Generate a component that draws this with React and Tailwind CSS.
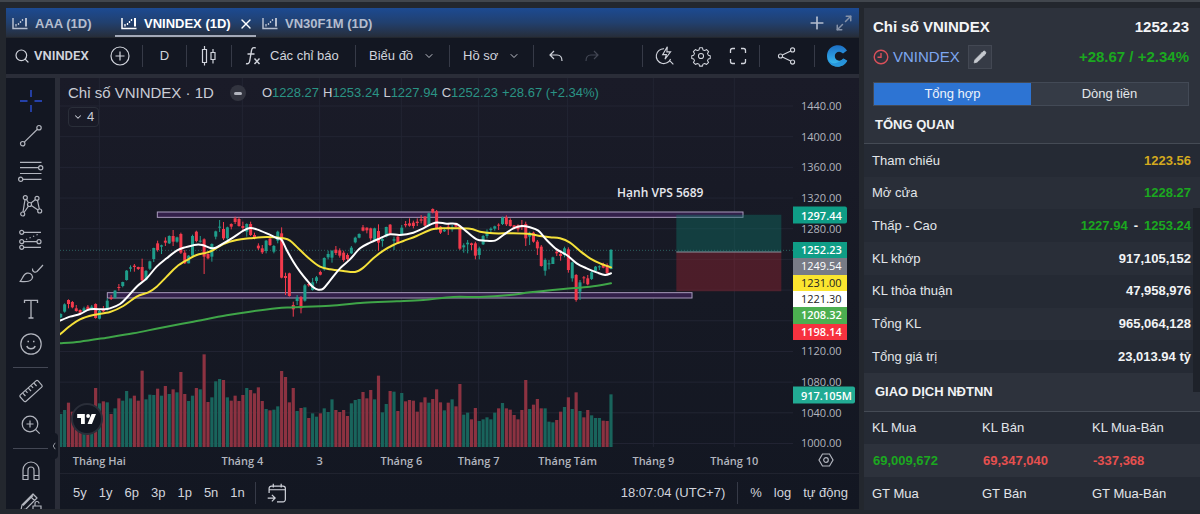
import { ChevronDown, Maximize2, Pencil, Plus, Search, X } from "lucide-react";

// [up/down, high, body top, body bottom, low, volume top], plot units
const CANDLES = [
  ["g", 340, 342, 352, 355, 222], ["g", 310, 313, 335, 338, 210], ["r", 298, 300, 312, 325, 188],
  ["r", 303, 306, 322, 325, 215], ["r", 315, 325, 333, 335, 230], ["r", 328, 330, 338, 340, 225],
  ["g", 320, 325, 333, 335, 235], ["r", 315, 320, 330, 332, 230], ["g", 315, 320, 326, 330, 215],
  ["r", 310, 312, 354, 356, 144], ["g", 330, 333, 356, 358, 190], ["r", 318, 330, 334, 336, 184],
  ["g", 295, 302, 328, 332, 187], ["r", 285, 293, 297, 300, 222], ["g", 270, 272, 293, 295, 205],
  ["r", 252, 261, 264, 272, 175], ["g", 245, 246, 258, 262, 182], ["g", 210, 212, 240, 242, 153],
  ["g", 196, 202, 206, 215, 175], ["r", 192, 197, 201, 215, 167], ["r", 200, 201, 207, 210, 182],
  ["r", 176, 201, 241, 245, 92], ["g", 210, 213, 240, 242, 178], ["g", 182, 184, 206, 210, 164],
  ["g", 143, 144, 177, 186, 165], ["r", 122, 130, 150, 155, 146], ["g", 134, 136, 140, 162, 167],
  ["r", 112, 122, 128, 138, 138], ["g", 106, 108, 130, 132, 162], ["r", 90, 108, 125, 138, 148],
  ["g", 110, 112, 125, 128, 157], ["r", 98, 102, 158, 162, 96], ["r", 150, 158, 190, 192, 162],
  ["g", 165, 167, 190, 190, 183], ["g", 104, 108, 167, 168, 167], ["r", 92, 95, 123, 127, 144],
  ["g", 108, 122, 125, 128, 148], ["r", 115, 118, 170, 222, 43], ["r", 160, 162, 175, 178, 186],
  ["g", 130, 132, 170, 185, 172], ["g", 92, 94, 110, 118, 124], ["g", 60, 80, 83, 96, 117],
  ["r", 66, 87, 115, 120, 120], ["g", 80, 82, 115, 120, 172], ["r", 70, 72, 80, 88, 182],
  ["r", 50, 55, 66, 72, 167], ["r", 52, 57, 78, 80, 183], ["r", 65, 78, 84, 95, 165],
  ["g", 70, 72, 95, 110, 144], ["r", 65, 72, 105, 108, 150], ["r", 98, 105, 114, 118, 160],
  ["r", 130, 137, 145, 150, 142], ["r", 135, 145, 157, 162, 183], ["g", 120, 122, 153, 160, 207],
  ["r", 112, 116, 135, 138, 211], ["g", 135, 138, 155, 160, 209], ["g", 92, 95, 122, 130, 199],
  ["r", 82, 100, 233, 235, 93], ["r", 218, 228, 234, 285, 111], ["r", 218, 220, 288, 290, 187],
  ["r", 305, 315, 328, 350, 144], ["g", 285, 293, 303, 315, 213], ["r", 288, 292, 325, 340, 204],
  ["g", 252, 256, 302, 305, 202], ["r", 245, 252, 256, 260, 234], ["g", 234, 247, 270, 272, 220],
  ["g", 228, 232, 243, 250, 230], ["r", 212, 216, 224, 226, 220], ["g", 172, 174, 208, 212, 205],
  ["g", 152, 162, 172, 178, 216], ["g", 150, 153, 173, 188, 178], ["r", 138, 149, 159, 165, 210],
  ["r", 145, 151, 167, 173, 216], ["r", 152, 158, 180, 185, 210], ["r", 160, 165, 177, 182, 228],
  ["g", 138, 143, 160, 162, 190], ["g", 110, 113, 127, 130, 180], ["g", 100, 102, 113, 115, 177],
  ["r", 75, 82, 92, 94, 156], ["r", 82, 83, 91, 100, 175], ["r", 83, 85, 115, 122, 150],
  ["g", 83, 85, 120, 123, 178], ["r", 73, 93, 128, 152, 107], ["g", 110, 117, 123, 140, 217],
  ["g", 80, 81, 110, 112, 192], ["r", 72, 74, 100, 102, 153], ["g", 110, 118, 122, 150, 155],
  ["r", 107, 110, 130, 132, 213], ["g", 75, 83, 105, 108, 159], ["r", 63, 72, 76, 82, 184],
  ["r", 55, 70, 77, 80, 180], ["r", 62, 68, 78, 85, 182], ["r", 55, 65, 69, 78, 215],
  ["r", 45, 58, 62, 70, 187], ["r", 48, 50, 77, 78, 172], ["g", 38, 40, 75, 78, 188],
  ["r", 25, 27, 37, 40, 177], ["r", 30, 34, 87, 89, 148], ["r", 78, 80, 98, 102, 187],
  ["g", 85, 90, 94, 96, 211], ["r", 70, 80, 84, 105, 188], ["g", 75, 82, 88, 95, 178],
  ["r", 68, 70, 80, 82, 199], ["r", 75, 78, 146, 150, 132], ["g", 130, 136, 142, 158, 224],
  ["g", 120, 128, 133, 160, 218], ["r", 128, 130, 135, 150, 238], ["r", 125, 130, 167, 178, 204],
  ["g", 140, 145, 165, 178, 243], ["g", 105, 108, 133, 135, 238], ["g", 88, 95, 108, 115, 232],
  ["g", 82, 86, 90, 98, 238], ["g", 77, 79, 86, 92, 218], ["r", 70, 74, 77, 90, 205],
  ["g", 50, 53, 72, 75, 189], ["r", 46, 52, 73, 78, 205], ["r", 55, 60, 78, 80, 209],
  ["r", 75, 76, 85, 88, 225], ["r", 73, 76, 88, 95, 238], ["r", 60, 77, 82, 90, 210],
  ["r", 65, 72, 115, 138, 120], ["g", 95, 98, 110, 135, 207], ["r", 95, 98, 125, 128, 194],
  ["r", 120, 125, 145, 165, 177], ["r", 135, 140, 198, 200, 205], ["g", 175, 180, 212, 227, 205],
  ["g", 180, 190, 193, 208, 245], ["g", 170, 172, 192, 192, 247], ["r", 145, 155, 160, 168, 240],
  ["r", 150, 162, 168, 182, 215], ["g", 140, 145, 165, 172, 201], ["r", 142, 148, 210, 218, 172],
  ["g", 185, 187, 235, 245, 207], ["r", 222, 225, 300, 305, 157], ["g", 240, 247, 275, 300, 213],
  ["r", 228, 232, 235, 250, 232], ["r", 225, 235, 253, 256, 210], ["g", 213, 217, 237, 240, 226],
  ["g", 198, 200, 213, 215, 234], ["g", 196, 199, 202, 210, 234], ["r", 188, 192, 203, 205, 242],
  ["r", 190, 195, 220, 220, 243], ["g", 147, 150, 207, 208, 163],
];

const MA_FAST = [
  [0, 362], [30, 350], [60, 342], [90, 328], [130, 328], [150, 325], [180, 312], [205, 288],
  [230, 260], [260, 235], [290, 200], [320, 175], [350, 152], [375, 142], [410, 134], [430, 136],
  [460, 145], [490, 130], [520, 112], [550, 92], [570, 84], [590, 88], [620, 100], [650, 114],
  [665, 120], [680, 150], [700, 185], [720, 215], [740, 240], [760, 262], [775, 269], [790, 266],
  [810, 242], [840, 205], [870, 178], [900, 145], [930, 128], [960, 115], [990, 103], [1020, 105],
  [1060, 98], [1090, 85], [1125, 68], [1160, 71], [1190, 72], [1220, 95], [1250, 118], [1275, 122],
  [1305, 122], [1330, 105], [1360, 85], [1385, 78], [1410, 82], [1435, 92], [1460, 120],
  [1490, 148], [1520, 165], [1550, 190], [1580, 205], [1610, 217], [1635, 225], [1653, 220],
];

const MA_SLOW = [
  [0, 403], [30, 378], [60, 358], [100, 345], [150, 336], [190, 318], [230, 290], [265, 277],
  [290, 260], [320, 230], [350, 200], [385, 178], [410, 165], [440, 158], [460, 150], [490, 132],
  [530, 120], [570, 115], [620, 111], [670, 115], [690, 122], [720, 150], [750, 178], [780, 200],
  [810, 208], [850, 213], [885, 216], [910, 203], [940, 175], [970, 152], [1000, 135], [1030, 123],
  [1070, 108], [1120, 87], [1170, 85], [1230, 86], [1260, 95], [1300, 100], [1360, 100],
  [1410, 102], [1440, 108], [1470, 112], [1500, 115], [1530, 128], [1560, 153], [1590, 175],
  [1620, 190], [1653, 202],
];

const MA_LONG = [
  [0, 430], [60, 425], [140, 413], [220, 400], [300, 384], [400, 365], [500, 346], [570, 335],
  [650, 325], [700, 322], [810, 317], [910, 308], [1010, 304], [1090, 300], [1180, 291],
  [1260, 291], [1350, 285], [1410, 277], [1510, 267], [1590, 260], [1653, 250],
];

const PRICES = [1440, 1400, 1360, 1320, 1280, 1120, 1080, 1040, 1000];
const GRID_PRICES = [1440, 1400, 1360, 1320, 1280, 1240, 1200, 1160, 1120, 1080, 1040, 1000];

// x is in plot units (0..2199)
const MONTHS = [
  { label: "Tháng Hai", x: 118 },
  { label: "Tháng 4", x: 547 },
  { label: "3", x: 779 },
  { label: "Tháng 6", x: 1024 },
  { label: "Tháng 7", x: 1256 },
  { label: "Tháng Tám", x: 1523 },
  { label: "Tháng 9", x: 1780 },
  { label: "Tháng 10", x: 2023 },
];

const TAGS = [
  { value: "1252.23", className: "bg-[#0f9d86] text-white font-semibold" },
  { value: "1249.54", className: "bg-[#787b86] text-white" },
  { value: "1231.00", className: "bg-[#fbe52f] text-[#222222]" },
  { value: "1221.30", className: "bg-white text-[#222222]" },
  { value: "1208.32", className: "bg-[#4caf50] text-white font-semibold" },
  { value: "1198.14", className: "bg-[#f7323f] text-white font-semibold" },
];

const OVERVIEW = [
  { label: "Tham chiếu", value: "1223.56", className: "text-[#d3a91e]" },
  { label: "Mở cửa", value: "1228.27", className: "text-[#1ba81f]" },
  { label: "Thấp - Cao", value: "1227.94", high: "1253.24", className: "text-[#1ba81f]" },
  { label: "KL khớp", value: "917,105,152", className: "text-[#f1f3f5]" },
  { label: "KL thỏa thuận", value: "47,958,976", className: "text-[#f1f3f5]" },
  { label: "Tổng KL", value: "965,064,128", className: "text-[#f1f3f5]" },
  { label: "Tổng giá trị", value: "23,013.94 tỷ", className: "text-[#f1f3f5]" },
];

const priceTop = (price) => 28 + (1440 - price) * 0.767;

// Catmull-Rom through the points, written as cubic beziers
function smooth(points) {
  let d = `M${points[0][0]} ${points[0][1]}`;
  for (let i = 0; i < points.length - 1; i++) {
    const a = points[i - 1] || points[i];
    const b = points[i];
    const c = points[i + 1];
    const e = points[i + 2] || c;
    d += `C${b[0] + (c[0] - a[0]) / 6} ${b[1] + (c[1] - a[1]) / 6} ${c[0] - (e[0] - b[0]) / 6} ${c[1] - (e[1] - b[1]) / 6} ${c[0]} ${c[1]}`;
  }
  return d;
}

function Icon({ children, className = "size-7" }) {
  return (
    <svg
      viewBox="0 0 28 28"
      className={className}
      fill="none"
      stroke="currentColor"
      strokeWidth="1.2"
      aria-hidden="true"
    >
      {children}
    </svg>
  );
}

function TabIcon() {
  return (
    <svg viewBox="0 0 16 13" className="h-[13px] w-4 shrink-0" fill="none" stroke="currentColor" aria-hidden="true">
      <path d="M1 1v10.500h14.500" strokeWidth="1.500" />
      <path d="M14 1v8.500" strokeWidth="2" />
      <path d="M4 9.500V7M6.500 8V6M8.500 6V4M10.500 4V2" strokeWidth="1.300" />
    </svg>
  );
}

function Tab({ label, active, className }) {
  return (
    <button
      type="button"
      role="tab"
      aria-selected={Boolean(active)}
      className={`flex h-full items-center gap-[7px] border-b-2 px-1.5 pt-1 text-[13px] font-bold whitespace-nowrap ${
        active ? "border-[#a3a9b8] text-white" : "border-transparent text-[#b4bdce]"
      } ${className}`}
    >
      <TabIcon />
      <span>{label}</span>
      {active && <X className="size-4 shrink-0" strokeWidth={2} />}
    </button>
  );
}

function TabBar() {
  return (
    <div
      role="tablist"
      className="flex h-[29px] items-center bg-linear-to-b from-[#1c4a92] via-[#21406f] to-[#262d3a]"
    >
      <Tab label="AAA (1D)" className="w-[109px]" />
      <Tab label="VNINDEX (1D)" active className="w-[141px]" />
      <Tab label="VN30F1M (1D)" className="w-[130px]" />
      <div className="ml-auto flex items-center gap-2 pr-1.5 text-[#b4bdce]">
        <button type="button" aria-label="Thêm tab">
          <Plus className="size-5" strokeWidth={2} />
        </button>
        <button type="button" aria-label="Mở rộng" className="text-[#8592a8]">
          <Maximize2 className="size-[18px]" strokeWidth={2} />
        </button>
      </div>
    </div>
  );
}

function Separator() {
  return <span className="h-[22px] w-px shrink-0 bg-[#363a47]" />;
}

function ToolButton({ label, className, children }) {
  return (
    <button
      type="button"
      aria-label={label}
      className={`flex h-full shrink-0 items-center justify-center ${className}`}
    >
      {children}
    </button>
  );
}

function Toolbar() {
  return (
    <div className="mt-px flex h-9 items-center bg-[#131722] text-[13px] text-[#d1d4dc]">
      <button
        type="button"
        className="flex h-full w-[92px] shrink-0 items-center gap-1 pl-2 font-['Roboto',sans-serif] font-semibold"
      >
        <Search className="size-4" strokeWidth={1.8} />
        VNINDEX
      </button>
      <ToolButton label="So sánh" className="w-11">
        <Icon>
          <circle cx="14" cy="14" r="9" />
          <path d="M14 9.500v9M9.500 14h9" />
        </Icon>
      </ToolButton>
      <Separator />
      <button type="button" className="h-full w-[43px] shrink-0">D</button>
      <Separator />
      <ToolButton label="Nến" className="w-11">
        <Icon>
          <path d="M7.500 7.500h4v13h-4zM9.500 4v3.500M9.500 20.500v3M16 10.500h4v7h-4zM18 7v3.500M18 17.500v4" />
        </Icon>
      </ToolButton>
      <Separator />
      <button type="button" className="flex h-full w-[123px] shrink-0 items-center gap-0.5 pl-2">
        <Icon>
          <path d="M6 21.500c2 .8 3.300-.2 3.700-2.500l1.800-10.500c.4-2.600 2-3.500 4.200-2.500M7.500 12h7M14.500 16.500l5 5.500M19.500 16.500l-5 5.500" strokeWidth="1.400" />
        </Icon>
        <span className="whitespace-nowrap">Các chỉ báo</span>
      </button>
      <Separator />
      <button type="button" className="flex h-full w-[93px] shrink-0 items-center gap-2.5 pl-[13px] whitespace-nowrap">
        Biểu đồ
        <ChevronDown className="size-3" strokeWidth={1.8} />
      </button>
      <Separator />
      <button type="button" className="flex h-full w-[83px] shrink-0 items-center gap-2.5 pl-[13px] whitespace-nowrap">
        Hồ sơ
        <ChevronDown className="size-3" strokeWidth={1.8} />
      </button>
      <Separator />
      <ToolButton label="Hoàn tác" className="w-11">
        <Icon>
          <path d="M12 9l-4 4 4 4M8.500 13h6.500c3.500 0 5 2 5 6" />
        </Icon>
      </ToolButton>
      <ToolButton label="Làm lại" className="w-7 text-[#434754]">
        <Icon>
          <path d="M16 9l4 4-4 4M19.500 13H13c-3.500 0-5 2-5 6" />
        </Icon>
      </ToolButton>
      <div className="ml-auto flex h-full items-center">
        <Separator />
        <ToolButton label="Tìm nhanh" className="w-[43px]">
          <Icon className="size-[26px]">
            <path d="M13 6.200a8 8 0 1 0 7 11M18.500 18.500l4.500 4.500M16.500 4l-5 8.500h4l-1.500 5 6-8h-4z" />
          </Icon>
        </ToolButton>
        <ToolButton label="Cài đặt" className="w-[30px]">
          <Icon className="size-6">
            <circle cx="14" cy="14" r="3" />
            <path
              strokeLinejoin="round"
              d="M12.300 4.500h3.400l.6 2.400 2 .8 2.200-1.200 2.400 2.400-1.300 2.100.9 2 2.300.6v3.200l-2.300.6-.9 2 1.300 2.100-2.400 2.400-2.200-1.200-2 .8-.6 2.300h-3.400l-.6-2.300-2-.8-2.200 1.200-2.400-2.400 1.300-2.100-.9-2-2.300-.6v-3.200l2.300-.6.9-2-1.300-2.100 2.400-2.400 2.200 1.200 2-.8z"
            />
          </Icon>
        </ToolButton>
        <ToolButton label="Toàn màn hình" className="w-[43px]">
          <Icon>
            <path d="M6.500 11V8.500a2 2 0 0 1 2-2H11M17 6.500h2.500a2 2 0 0 1 2 2V11M21.500 17v2.500a2 2 0 0 1-2 2H17M11 21.500H8.500a2 2 0 0 1-2-2V17" strokeWidth="1.300" />
          </Icon>
        </ToolButton>
        <Separator />
        <ToolButton label="Chia sẻ" className="w-[54px]">
          <Icon className="size-[26px]">
            <circle cx="7" cy="14" r="2.200" />
            <circle cx="20" cy="7.500" r="2.200" />
            <circle cx="20" cy="20.500" r="2.200" />
            <path d="M9 13l9-4.500M9 15l9 4.500" />
          </Icon>
        </ToolButton>
        <Separator />
        <ToolButton label="Trang chủ" className="w-11">
          <svg viewBox="0 0 24 24" className="size-6" aria-hidden="true">
            <defs>
              <linearGradient id="brand" x1="0" y1="0" x2="0" y2="1">
                <stop offset="0" stopColor="#1d6fc4" />
                <stop offset="0.55" stopColor="#2c9be0" />
                <stop offset="1" stopColor="#3fc4f0" />
              </linearGradient>
            </defs>
            <path d="M22 6.500C19.500 2.300 15.500.8 11.500 1.300 6 2 2 6.500 2 12c0 6 4.500 10.700 10.500 10.700 4.200 0 7.800-2.200 9.800-6l-3.800-2.200-2 1.500c-2.600 1.600-6.700.2-6.700-3.900 0-4 4.200-5.500 6.700-3.700l1.500 1.100z" fill="url(#brand)" />
            <path d="M2 12c.5 6 5 8 9 7 3-.7 5-2 7-4.500l4.300 2.200c-2 3.800-5.600 6-9.800 6C6.500 22.700 2 18 2 12z" fill="#1c7fd0" opacity="0.600" />
          </svg>
        </ToolButton>
      </div>
    </div>
  );
}

const DRAW_TOOLS = [
  {
    label: "Con trỏ",
    className: "text-[#2d50d6]",
    icon: <path d="M14 3v7M14 18v7M3 14h7.500M17.500 14H25" strokeWidth="1.400" />,
  },
  {
    label: "Đường xu hướng",
    icon: (
      <>
        <circle cx="22" cy="5.700" r="2.200" />
        <circle cx="5.700" cy="21.700" r="2.200" />
        <path d="M20.400 7.300L7.300 20.100" />
      </>
    ),
  },
  {
    label: "Fibonacci",
    icon: (
      <>
        <path d="M3 5.300h21.500M3 10.700h18.500M3 16.500h21.500M6 22.300h18.500" />
        <circle cx="23.700" cy="10.700" r="2.100" />
        <circle cx="3.700" cy="22.300" r="2.100" />
      </>
    ),
  },
  {
    label: "Mẫu hình",
    icon: (
      <>
        <circle cx="8.300" cy="6.700" r="2" />
        <circle cx="20" cy="7.300" r="2" />
        <circle cx="12.500" cy="13.500" r="2" />
        <circle cx="5.700" cy="23" r="2" />
        <circle cx="22.700" cy="20" r="2" />
        <path d="M6 21l2-12.300M9.500 8.500l2 3.200M14 12l4.500-3.500M20.500 9.300l1.800 8.700M7 21.500l4.500-6.300M14.300 14.500l6.700 4.500" />
      </>
    ),
  },
  {
    label: "Dự báo",
    icon: (
      <>
        <circle cx="4.700" cy="6.300" r="2" />
        <circle cx="4.700" cy="15.700" r="2" />
        <circle cx="4.700" cy="21.300" r="2" />
        <circle cx="22" cy="15.700" r="2" />
        <path d="M6.700 6.300H24M6.700 15.700H20M6.700 21.300H24" />
        <path d="M9 13.500l13-5.500" strokeDasharray="1.300 2.500" />
      </>
    ),
  },
  {
    label: "Bút vẽ",
    icon: (
      <path
        strokeLinejoin="round"
        d="M3 21.500c2.500-2 3-7.500 7-8.300 4-.7 6.500 2.500 5 5.500-2 3.500-6 2.800-12 2.800zM15.500 8.500c-.5 3 2.500 4.500 4.500 3L26 5"
      />
    ),
  },
  {
    label: "Chữ",
    icon: <path d="M7.500 8V5.300h13V8M14 5.300V23M11.500 23h5" strokeWidth="1.300" />,
  },
  {
    label: "Biểu tượng",
    icon: (
      <>
        <circle cx="14" cy="14" r="10.200" />
        <path d="M9.800 16c1.500 3.800 6.900 3.800 8.400 0M10.500 11.500h1.500M16 11.500h1.500" strokeWidth="1.500" />
      </>
    ),
  },
];

const MEASURE_TOOLS = [
  {
    label: "Thước đo",
    icon: (
      <g transform="rotate(-42 14 14)">
        <rect x="2" y="9.800" width="24" height="8.500" rx="1.500" />
        <path d="M6.500 10v4M10.200 10v3M14 10v4M17.700 10v3M21.500 10v4" />
      </g>
    ),
  },
  {
    label: "Phóng to",
    icon: (
      <>
        <circle cx="13" cy="13" r="7.800" />
        <path d="M18.700 18.700l4 4M13 9.500v7M9.500 13h7" />
      </>
    ),
  },
];

const MODE_TOOLS = [
  {
    label: "Nam châm",
    icon: (
      <path d="M6 22.500V13a8 8 0 0 1 16 0v9.500h-5V13a3 3 0 0 0-6 0v9.500zM6 18.500h5M17 18.500h5" />
    ),
  },
  {
    label: "Khóa vẽ",
    icon: (
      <>
        <path strokeLinejoin="round" d="M4 21l1-5L16 5l4 4L9 20zM13.500 7.500l4 4M6 16.500l10-10" />
        <path d="M16 17h8v7h-8zM18 17v-2.500a2 2 0 0 1 4 0" />
      </>
    ),
  },
];

function ToolGroup({ tools, className }) {
  return (
    <div className={`flex flex-col items-center ${className}`}>
      {tools.map((tool) => (
        <button
          key={tool.label}
          type="button"
          aria-label={tool.label}
          className={`flex min-h-0 flex-1 basis-8 items-center justify-center ${tool.className || ""}`}
        >
          <Icon>{tool.icon}</Icon>
        </button>
      ))}
    </div>
  );
}

function SideTools() {
  return (
    <div className="relative w-[49px] shrink-0 bg-[#131722] pt-1.5 text-[#b2b5be]">
      <ToolGroup tools={DRAW_TOOLS} className="h-[277px]" />
      <hr className="mx-[7px] mt-1.5 border-[#434754]" />
      <ToolGroup tools={MEASURE_TOOLS} className="mt-1.5 h-[68px]" />
      <hr className="mx-[7px] mt-1.5 border-[#434754]" />
      <div className="mt-1.5 h-[54px] overflow-hidden">
        <ToolGroup tools={MODE_TOOLS} className="h-16" />
      </div>
      <button
        type="button"
        aria-label="Ẩn thanh công cụ"
        className="absolute right-[-3px] bottom-[50px] flex h-[26px] w-2 items-center justify-center rounded-sm bg-[#131722] text-[#b2b5be]"
      >
        <svg viewBox="0 0 6 10" className="h-2 w-1.5" fill="none" stroke="currentColor" aria-hidden="true">
          <path d="M4.500 1L2 5l2.500 4" />
        </svg>
      </button>
    </div>
  );
}

function Plot() {
  return (
    <svg viewBox="0 0 2199 1107" preserveAspectRatio="none" className="block h-[369px] w-full" aria-hidden="true">
      <g stroke="#222533" strokeWidth="3">
        {GRID_PRICES.map((price) => (
          <line key={price} x1="0" x2="2199" y1={priceTop(price) * 3} y2={priceTop(price) * 3} />
        ))}
        {MONTHS.map((month) => (
          <line key={month.label} x1={month.x} x2={month.x} y1="0" y2="1107" />
        ))}
      </g>
      <line x1="0" x2="2199" y1="517" y2="517" stroke="#2b5f60" strokeWidth="3" strokeDasharray="3 6" />

      <g>
        {CANDLES.map(([side, , , , , top], i) => (
          <rect
            key={i}
            x={i * 11.625 - 2.5}
            y={top + 786}
            width="9.500"
            height={321 - top}
            fill={side === "g" ? "#19645c" : "#8c3241"}
          />
        ))}
      </g>

      <g transform="translate(0 366)">
        <g fill="#33204a" stroke="#a99bbd" strokeWidth="3">
          <rect x="292" y="36" width="1757" height="16" />
          <rect x="142" y="278" width="1754" height="16" />
        </g>
        <path d="M1849 44h315v112h-315z" fill="#10766a" fillOpacity="0.400" />
        <path d="M1849 156h315v118h-315z" fill="#8f2330" fillOpacity="0.450" />
        <path d="M1849 156h315" stroke="#8d929c" strokeWidth="3" />
        {CANDLES.map(([side, high, top, bottom, low], i) => {
          const x = i * 11.625 + 2.25;
          const color = side === "g" ? "#1f9d8b" : "#f23a4c";
          return (
            <g key={i} fill={color}>
              <rect x={x - 1.5} y={high} width="3" height={low - high} />
              <rect x={x - 4.5} y={top} width="9" height={bottom - top} />
            </g>
          );
        })}
        <g fill="none" strokeLinecap="round" strokeLinejoin="round">
          <path d={smooth(MA_LONG)} stroke="#3fa548" strokeWidth="6" />
          <path d={smooth(MA_SLOW)} stroke="#f5e13a" strokeWidth="6" />
          <path d={smooth(MA_FAST)} stroke="#ffffff" strokeWidth="6" />
        </g>
      </g>
    </svg>
  );
}

function Ohlc({ name, value }) {
  return (
    <span>
      {name}
      <span className="text-[#2a9485]">{value}</span>
    </span>
  );
}

function Legend() {
  return (
    <div className="absolute top-1 left-2 text-[#c9ccd5]">
      <div className="flex h-[22px] items-center whitespace-nowrap">
        <h2 className="text-[15px]">Chỉ số VNINDEX · 1D</h2>
        <span className="ml-4 flex size-4 items-center justify-center rounded-full bg-[#32343f]">
          <span className="h-[3px] w-2 rounded-sm bg-[#b2b5be]" />
        </span>
        <div className="ml-4 flex gap-1 text-[13px]">
          <Ohlc name="O" value="1228.27" />
          <Ohlc name="H" value="1253.24" />
          <Ohlc name="L" value="1227.94" />
          <Ohlc name="C" value="1252.23" />
          <span className="text-[#2a9485]">+28.67 (+2.34%)</span>
        </div>
      </div>
      <button
        type="button"
        className="mt-[3px] flex h-5 w-[31px] items-center justify-center gap-1 rounded-sm border border-[#2a2e39] text-[13px]"
      >
        <ChevronDown className="size-2.5" strokeWidth={2.5} />4
      </button>
    </div>
  );
}

function PriceAxis() {
  return (
    <div className="relative w-[66px] shrink-0 font-['Open_Sans',sans-serif] text-[11px] font-medium text-[#b2b5be]">
      {PRICES.map((price) => (
        <span
          key={price}
          className="absolute left-2 -translate-y-1/2 leading-4"
          style={{ top: priceTop(price) }}
        >
          {price.toFixed(2)}
        </span>
      ))}
      <span
        className="absolute left-0 h-[17px] w-[54px] -translate-y-1/2 rounded-r-xs bg-[#0f9d86] pl-2 leading-[17px] font-semibold text-white"
        style={{ top: priceTop(1297.44) }}
      >
        1297.44
      </span>
      <div
        className="absolute left-0 flex h-[98px] w-[54px] flex-col"
        style={{ top: priceTop(1252.23) - 8 }}
      >
        {TAGS.map((tag) => (
          <span key={tag.value} className={`flex min-h-0 flex-1 items-center pl-2 ${tag.className}`}>
            {tag.value}
          </span>
        ))}
      </div>
      <span
        className="absolute left-0 h-[17px] w-[62px] -translate-y-1/2 rounded-r-xs bg-[#22ab94] pl-2 leading-[17px] font-semibold text-white"
        style={{ top: priceTop(1063.5) }}
      >
        917.105M
      </span>
    </div>
  );
}

function TimeAxis() {
  return (
    <div className="flex h-[27px] border-b border-[#20232f] font-['Open_Sans',sans-serif] text-[11px] font-semibold text-[#b2b5be]">
      <div className="relative min-w-0 flex-1">
        {MONTHS.map((month) => (
          <span
            key={month.label}
            className="absolute top-1.5 -translate-x-1/2 leading-4 whitespace-nowrap"
            style={{ left: `${(month.x / 2199) * 100}%` }}
          >
            {month.label}
          </span>
        ))}
      </div>
      <button type="button" aria-label="Cài đặt trục" className="flex w-[66px] items-center justify-center">
        <svg viewBox="0 0 16 16" className="size-4" fill="none" stroke="currentColor" strokeWidth="1.200" aria-hidden="true">
          <path d="M4.500 2h7L15 8l-3.500 6h-7L1 8z" />
          <circle cx="8" cy="8" r="2.300" />
        </svg>
      </button>
    </div>
  );
}

function RangeBar() {
  return (
    <div className="flex h-[35px] items-center pt-0.5 pr-[11px] pl-[13px] text-[13px] whitespace-nowrap text-[#d1d4dc]">
      <div className="flex gap-3">
        {["5y", "1y", "6p", "3p", "1p", "5n", "1n"].map((range) => (
          <button key={range} type="button">
            {range}
          </button>
        ))}
      </div>
      <span className="ml-2.5 h-[22px] w-px bg-[#363a47]" />
      <button type="button" aria-label="Đi đến ngày" className="ml-2">
        <Icon className="size-[26px]">
          <path d="M5.500 14V9a2.500 2.500 0 0 1 2.500-2.500h12.500A2.500 2.500 0 0 1 23 9v12a2.500 2.500 0 0 1-2.500 2.500H14M5.500 10.500H23M10 4v4M18.500 4v4M4 19.500h7.500M8.500 16l3.500 3.500L8.500 23" strokeWidth="1.300" />
        </Icon>
      </button>
      <div className="ml-auto flex items-center gap-3">
        <button type="button">18:07:04 (UTC+7)</button>
        <span className="h-[22px] w-px bg-[#363a47]" />
        <button type="button">%</button>
        <button type="button">log</button>
        <button type="button">tự động</button>
      </div>
    </div>
  );
}

function Chart() {
  return (
    <div className="min-w-0 flex-1 bg-linear-to-b from-[#1a1b28] via-[#161924] to-[#131722]">
      <div className="flex">
        <div className="relative min-w-0 flex-1 overflow-hidden">
          <Plot />
          <Legend />
          <span className="absolute top-[107px] left-[76%] font-['Open_Sans',sans-serif] text-xs leading-4 font-semibold whitespace-nowrap text-[#e6e8ee]">
            Hạnh VPS 5689
          </span>
          <span className="absolute bottom-3 left-[11px] flex size-8 items-center justify-center rounded-full border-2 border-[#2a2e39] bg-[#131722]">
            <svg viewBox="0 0 36 22" className="h-3 w-5" fill="#ffffff" aria-hidden="true">
              <path d="M14 20H7V9H0V2h14zM27 20h-8l7.500-18h8z" />
              <circle cx="20" cy="5.500" r="3.500" />
            </svg>
          </span>
        </div>
        <PriceAxis />
      </div>
      <TimeAxis />
      <RangeBar />
    </div>
  );
}

function SectionTitle({ children, className }) {
  return (
    <h3
      className={`flex items-center border-b border-[#454b55] bg-[#2d323c] pl-[11px] text-[13px] font-bold text-[#f1f3f5] ${className}`}
    >
      {children}
    </h3>
  );
}

function IndexPanel() {
  return (
    <aside className="relative w-[28%] shrink-0 bg-[#252a34] text-[13px] text-[#e3e6ea]">
      <div className="bg-[#2d323c] pt-2 pr-[11px] pl-[9px]">
        <div className="flex h-[22px] items-center justify-between text-[15px] font-bold text-[#f4f5f7]">
          <h2>Chỉ số VNINDEX</h2>
          <span>1252.23</span>
        </div>
        <div className="mt-[7px] flex h-6 items-center text-[15px]">
          <svg viewBox="0 0 16 16" className="size-4 shrink-0" fill="none" stroke="#d9505a" strokeWidth="1.400" aria-hidden="true">
            <circle cx="8" cy="8" r="6.800" />
            <path d="M8 4v4.300H4.500" />
          </svg>
          <a href="#vnindex" className="ml-1 text-[#7da7f0]">VNINDEX</a>
          <button
            type="button"
            aria-label="Sửa"
            className="ml-2 flex size-6 items-center justify-center border border-[#434853] bg-[#363b46] text-[#c6c9cf]"
          >
            <Pencil className="size-3.5" strokeWidth={1.5} fill="currentColor" />
          </button>
          <span className="ml-auto font-bold whitespace-nowrap text-[#1ba81f]">+28.67 / +2.34%</span>
        </div>
        <div role="tablist" className="mt-[13px] flex h-6 border border-[#434a56]">
          <button type="button" role="tab" aria-selected="true" className="flex-1 bg-[#2d74d3] text-[#eef3fb]">
            Tổng hợp
          </button>
          <button type="button" role="tab" aria-selected="false" className="flex-1 bg-[#353b46]">
            Dòng tiền
          </button>
        </div>
      </div>
      <SectionTitle className="h-[38px]">TỔNG QUAN</SectionTitle>
      <table className="h-[229px] w-full">
        <tbody>
          {OVERVIEW.map((row) => (
            <tr key={row.label} className="even:bg-[#292e38]">
              <th scope="row" className="py-0 pl-2 text-left font-normal">
                {row.label}
              </th>
              <td className={`py-0 pr-[9px] text-right font-bold ${row.className}`}>
                {row.value}
                {row.high && (
                  <>
                    <span className="px-1.5 text-[#f1f3f5]">-</span>
                    {row.high}
                  </>
                )}
              </td>
            </tr>
          ))}
        </tbody>
      </table>
      <SectionTitle className="h-[39px]">GIAO DỊCH NĐTNN</SectionTitle>
      <table className="w-full table-fixed">
        <thead>
          <tr className="h-8 text-left">
            <th scope="col" className="pl-2 font-normal">KL Mua</th>
            <th scope="col" className="pl-1.5 font-normal">KL Bán</th>
            <th scope="col" className="pl-1 font-normal">KL Mua-Bán</th>
          </tr>
        </thead>
        <tbody>
          <tr className="h-[33px] bg-[#2d323c] font-bold text-[#e5504f]">
            <td className="pl-[9px] text-[#1ba81f]">69,009,672</td>
            <td className="pl-[7px]">69,347,040</td>
            <td className="pl-[5px]">-337,368</td>
          </tr>
          <tr className="h-[33px] text-left">
            <th scope="col" className="pl-2 font-normal">GT Mua</th>
            <th scope="col" className="pl-1.5 font-normal">GT Bán</th>
            <th scope="col" className="pl-1 font-normal">GT Mua-Bán</th>
          </tr>
        </tbody>
      </table>
      <span className="absolute top-[200px] right-0 h-[184px] w-[7px] bg-[#1e222a]" />
    </aside>
  );
}

export default function App() {
  return (
    <main className="min-h-screen border-t-2 border-[#41464d] bg-[#23272e] pt-1.5 pb-1 font-['Liberation_Sans',Arial,sans-serif]">
      <div className="flex">
        <section className="mr-[5px] ml-1.5 min-w-0 flex-1">
          <TabBar />
          <Toolbar />
          <div className="flex gap-[5px] bg-[#2a2d38] pt-1">
            <SideTools />
            <Chart />
          </div>
        </section>
        <IndexPanel />
      </div>
    </main>
  );
}
